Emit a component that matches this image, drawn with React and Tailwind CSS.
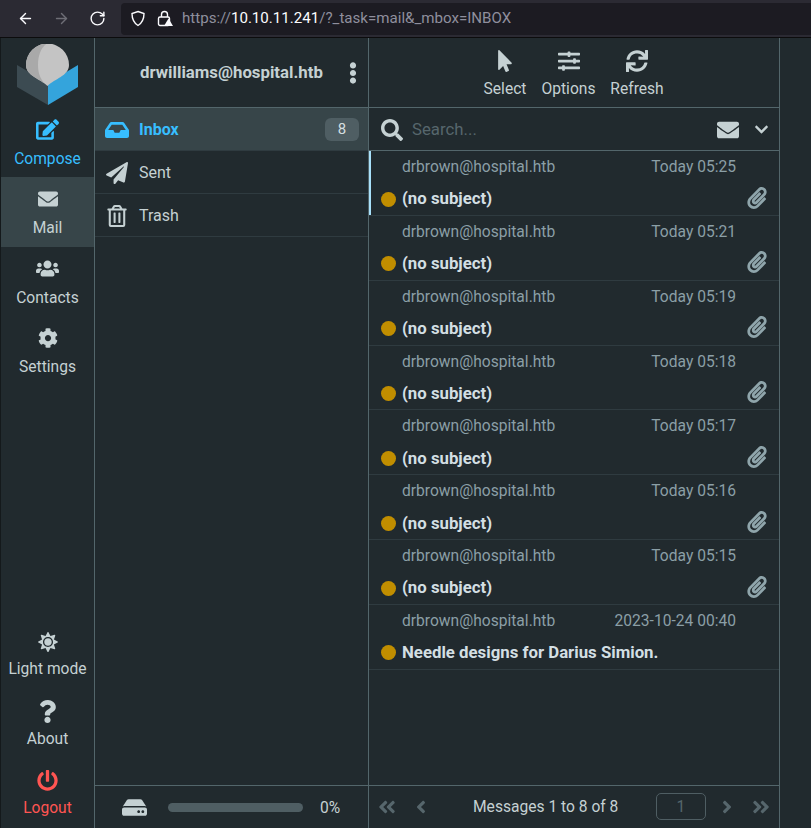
import {
  FaEdit,
  FaEnvelope,
  FaUsers,
  FaCog,
  FaSun,
  FaQuestion,
  FaPowerOff,
  FaInbox,
  FaPaperPlane,
  FaRegTrashAlt,
  FaMousePointer,
  FaSlidersH,
  FaSync,
  FaSearch,
  FaChevronDown,
  FaPaperclip,
  FaAngleDoubleLeft,
  FaAngleDoubleRight,
  FaAngleLeft,
  FaAngleRight,
  FaHdd,
  FaEllipsisV,
} from "react-icons/fa";
import { ArrowLeft, ArrowRight, RotateCw } from "lucide-react";

const MESSAGES = [
  { date: "Today 05:25", subject: "(no subject)", clip: true, selected: true },
  { date: "Today 05:21", subject: "(no subject)", clip: true },
  { date: "Today 05:19", subject: "(no subject)", clip: true },
  { date: "Today 05:18", subject: "(no subject)", clip: true },
  { date: "Today 05:17", subject: "(no subject)", clip: true },
  { date: "Today 05:16", subject: "(no subject)", clip: true },
  { date: "Today 05:15", subject: "(no subject)", clip: true },
  { date: "2023-10-24 00:40", subject: "Needle designs for Darius Simion." },
];

function Logo() {
  return (
    <svg width="62" height="62" viewBox="0 0 62 62">
      <path d="M0 21 L31 39 L31 61 L0 43 Z" fill="#3c4b52" />
      <path d="M61 21 L31 39 L31 61 L61 43 Z" fill="#34a4dc" />
      <path d="M30.5 42 C24 35 9 32 9 21 A21.5 21.5 0 0 1 52 21 C52 32 37 35 30.5 42 Z" fill="#c4c4c4" />
      <path d="M30.5 42 C24 35 9 32 9 21 A21.5 21.5 0 0 1 30 -0.5 C24 3 21 12 21 21 C21 30 24 37 30.5 42 Z" fill="#a9a9a9" />
    </svg>
  );
}

function SideItem({ icon: Icon, label, size = 20, active, color = "text-[#c5d1d3]", labelGap = "mt-[5px]" }) {
  return (
    <div className={`h-[69.5px] flex flex-col items-center pt-[10px] ${color} ${active ? "bg-[#374549]" : ""}`}>
      <div className="h-[24px] flex items-center justify-center">
        <Icon style={{ fontSize: size }} />
      </div>
      <span className={`text-[15.6px] leading-[20px] ${labelGap}`}>{label}</span>
    </div>
  );
}

function FolderRow({ icon: Icon, label, active, badge, iconSize }) {
  return (
    <div
      className={`h-[43px] flex items-center pl-[10px] pr-[9px] pt-[1px] border-b border-[#2f3b40] ${
        active ? "bg-[#374549] text-[#37beff] font-bold" : "text-[#c5d1d3]"
      }`}
    >
      <div className="w-[24px] flex justify-center">
        <Icon style={{ fontSize: iconSize }} />
      </div>
      <span className="ml-[10px] text-[16px] flex-1">{label}</span>
      {badge && (
        <span className="w-[34px] h-[23px] rounded-[6px] bg-[#4f5e63] text-[#d5dee0] font-normal text-[15px] flex items-center justify-center">
          {badge}
        </span>
      )}
    </div>
  );
}

function MessageRow({ msg }) {
  return (
    <div className="relative h-[64.85px] border-b border-[#2f3b40] pl-[12px] pr-[11px]">
      {msg.selected && <div className="absolute left-0 top-0 bottom-0 w-[2px] bg-[#a8e0fa]" />}
      <div className="flex justify-between pl-[21px] pr-[32px] pt-[6px] text-[15.6px] leading-[20px] text-[#8b9fa6]">
        <span>drbrown@hospital.htb</span>
        <span>{msg.date}</span>
      </div>
      <div className="flex items-center mt-[11px] h-[22px]">
        <span className="w-[15px] h-[15px] rounded-full bg-[#c18e00]" />
        <span className="ml-[6px] text-[16.8px] font-bold text-[#d3dfe3] flex-1">{msg.subject}</span>
        {msg.clip && <FaPaperclip className="text-[22px] text-[#8fa5ab] -mt-[3px]" />}
      </div>
    </div>
  );
}

function ToolButton({ icon: Icon, label, w }) {
  return (
    <div className="flex flex-col items-center text-[#c5d1d3]" style={{ width: w }}>
      <div className="h-[24px] flex items-center">
        <Icon className="text-[22px]" />
      </div>
      <span className="text-[15.6px] leading-[20px] mt-[6px]">{label}</span>
    </div>
  );
}

export default function App() {
  return (
    <div className="w-[811px] h-[828px] overflow-hidden flex flex-col bg-[#212a2e] font-['Roboto',sans-serif]">
      {/* browser bar */}
      <div className="h-[38px] shrink-0 bg-[#2b2a33] border-b border-[#0c0c0d] flex items-center pl-[17px]">
        <ArrowLeft size={17} className="text-[#fbfbfe]" />
        <ArrowRight size={17} className="text-[#6e6e76] ml-[19px]" />
        <RotateCw size={17} className="text-[#fbfbfe] ml-[19px]" />
        <div className="ml-[15px] flex-1 h-[32px] rounded-l-[4px] bg-[#1c1b22] flex items-center pl-[9px]">
          <svg width="16" height="17" viewBox="0 0 16 17" fill="none" stroke="#fbfbfe" strokeWidth="1.4">
            <path d="M8 1.5 L14 3.5 C14 9 12 13 8 15.5 C4 13 2 9 2 3.5 Z" />
          </svg>
          <svg width="16" height="17" viewBox="0 0 16 17" className="ml-[11px]" fill="none">
            <path d="M4.5 7 V4.5 A3 3 0 0 1 10.5 4.5 V7" stroke="#fbfbfe" strokeWidth="1.4" />
            <rect x="1.5" y="7" width="11" height="8.5" rx="1.5" stroke="#fbfbfe" strokeWidth="1.4" />
            <path d="M11.5 8.5 L16 16 H7 Z" fill="#fbfbfe" />
          </svg>
          <span className="ml-[9px] text-[15.1px] text-[#8f8f9d]">
            https://<span className="text-[#fbfbfe]">10.10.11.241</span>/?_task=mail&amp;_mbox=INBOX
          </span>
        </div>
      </div>

      <div className="flex-1 flex min-h-0 border-l border-[#14191b]">
        {/* sidebar */}
        <div className="w-[94px] shrink-0 flex flex-col border-r border-[#53666b]">
          <div className="h-[69.5px] shrink-0 flex justify-center pt-[6px]">
            <Logo />
          </div>
          <SideItem icon={FaEdit} label="Compose" size={23} color="text-[#37beff]" labelGap="mt-[7px]" />
          <SideItem icon={FaEnvelope} label="Mail" active labelGap="mt-[7px]" />
          <SideItem icon={FaUsers} label="Contacts" size={23} labelGap="mt-[7px]" />
          <SideItem icon={FaCog} label="Settings" labelGap="mt-[7px]" />
          <div className="mt-auto">
            <SideItem icon={FaSun} label="Light mode" />
            <SideItem icon={FaQuestion} label="About" size={23} labelGap="mt-[6px]" />
            <SideItem icon={FaPowerOff} label="Logout" size={21} color="text-[#ff5552]" />
          </div>
        </div>

        {/* folders */}
        <div className="w-[274px] shrink-0 flex flex-col border-r border-[#53666b]">
          <div className="h-[70px] shrink-0 flex items-center border-b border-[#53666b] text-[#c5d1d3]">
            <span className="ml-[45px] text-[16.8px] font-bold">drwilliams@hospital.htb</span>
            <FaEllipsisV className="ml-[19px] text-[22px]" />
          </div>
          <FolderRow icon={FaInbox} label="Inbox" active badge="8" iconSize={24} />
          <FolderRow icon={FaPaperPlane} label="Sent" iconSize={22} />
          <FolderRow icon={FaRegTrashAlt} label="Trash" iconSize={22} />
          <div className="mt-auto h-[43px] border-t border-[#53666b] flex items-center text-[#c5d1d3]">
            <FaHdd className="ml-[27px] text-[25px] " />
            <div className="ml-[21px] w-[135px] h-[9px] rounded-full bg-[#4f5e63]" />
            <span className="ml-[17px] pt-[4px] text-[15.6px]">0%</span>
          </div>
        </div>

        {/* message list */}
        <div className="w-[411px] shrink-0 flex flex-col border-r border-[#53666b]">
          <div className="h-[70px] shrink-0 border-b border-[#53666b] flex justify-center pt-[11px] pr-[1px] gap-[15px]">
            <ToolButton icon={FaMousePointer} label="Select" w={43} />
            <ToolButton icon={FaSlidersH} label="Options" w={54} />
            <ToolButton icon={FaSync} label="Refresh" w={53} />
          </div>
          <div className="h-[43px] shrink-0 border-b border-[#53666b] flex items-center pl-[12px] pt-[1px] text-[#c5d1d3]">
            <FaSearch className="text-[22px]" />
            <span className="ml-[9px] text-[16.8px] text-[#56666c] flex-1">Search...</span>
            <FaEnvelope className="text-[22px]" />
            <FaChevronDown className="ml-[15px] mr-[10px] text-[15px]" />
          </div>
          {MESSAGES.map((m, i) => (
            <MessageRow key={i} msg={m} />
          ))}
          <div className="mt-auto h-[43px] border-t border-[#53666b] flex items-center pl-[8px] text-[#56666c]">
            <FaAngleDoubleLeft className="text-[20px] shrink-0" />
            <FaAngleLeft className="ml-[14px] text-[20px] shrink-0" />
            <span className="ml-[42px] pt-[2px] text-[#c5d1d3] text-[15.6px] w-[183px] shrink-0">Messages 1 to 8 of 8</span>
            <span className="w-[50px] h-[27px] -mt-[2px] pt-[3px] shrink-0 rounded-[5px] border border-[#4f5e63] text-[15.6px] flex items-center justify-center">
              1
            </span>
            <FaAngleRight className="ml-[11px] text-[20px] shrink-0" />
            <FaAngleDoubleRight className="ml-[14px] text-[20px] shrink-0" />
          </div>
        </div>
      </div>
    </div>
  );
}
